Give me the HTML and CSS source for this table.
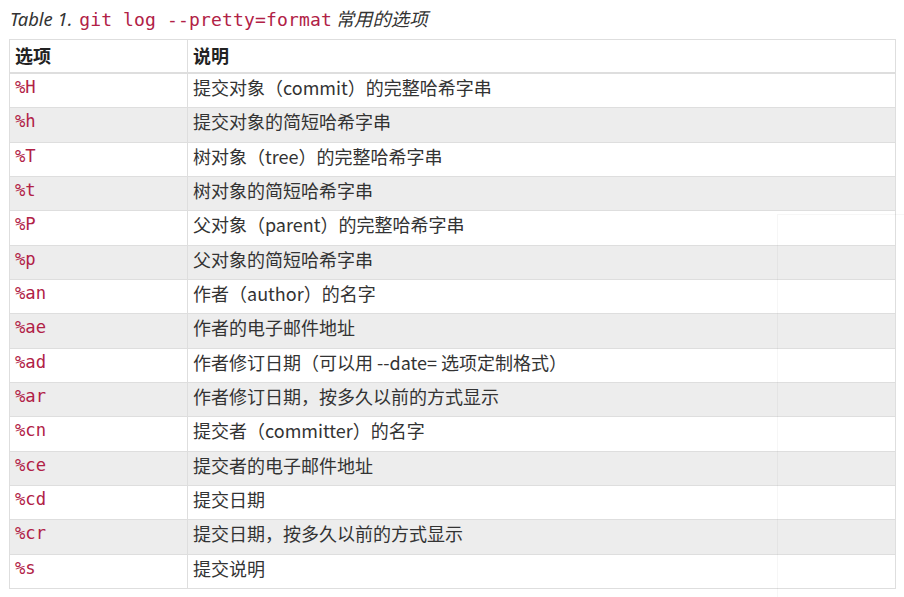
FILE: index.html
```html
<!DOCTYPE html>
<html lang="zh-CN">
<head>
<meta charset="utf-8">
<title>git log --pretty=format 常用的选项</title>
<link rel="stylesheet" href="styles.css">
</head>
<body>
<div class="page">
<table class="tableblock">
<caption class="title">Table 1. <code>git log --pretty=format</code> 常用的选项</caption>
<colgroup><col class="c1"><col class="c2"></colgroup>
<thead>
<tr><th>选项</th><th>说明</th></tr>
</thead>
<tbody>
<tr><td><code>%H</code></td><td>提交对象（commit）的完整哈希字串</td></tr>
<tr><td><code>%h</code></td><td>提交对象的简短哈希字串</td></tr>
<tr><td><code>%T</code></td><td>树对象（tree）的完整哈希字串</td></tr>
<tr><td><code>%t</code></td><td>树对象的简短哈希字串</td></tr>
<tr><td><code>%P</code></td><td>父对象（parent）的完整哈希字串</td></tr>
<tr><td><code>%p</code></td><td>父对象的简短哈希字串</td></tr>
<tr><td><code>%an</code></td><td>作者（author）的名字</td></tr>
<tr><td><code>%ae</code></td><td>作者的电子邮件地址</td></tr>
<tr><td><code>%ad</code></td><td>作者修订日期（可以用 --date= 选项定制格式）</td></tr>
<tr><td><code>%ar</code></td><td>作者修订日期，按多久以前的方式显示</td></tr>
<tr><td><code>%cn</code></td><td>提交者（committer）的名字</td></tr>
<tr><td><code>%ce</code></td><td>提交者的电子邮件地址</td></tr>
<tr><td><code>%cd</code></td><td>提交日期</td></tr>
<tr><td><code>%cr</code></td><td>提交日期，按多久以前的方式显示</td></tr>
<tr><td><code>%s</code></td><td>提交说明</td></tr>
</tbody>
</table>
<div class="ghost"></div>
</div>
</body>
</html>
```
FILE: styles.css
```css
html, body {
  margin: 0;
  padding: 0;
  background: #fff;
}
body {
  font-family: "Noto Sans", "Noto Sans CJK SC", sans-serif;
  color: #333;
  overflow: hidden;
}
.page {
  position: relative;
  padding: 6px 0 0 9px;
  height: 591px;
  width: 895px;
  overflow: hidden;
}
.tableblock {
  width: 887px;
  border-collapse: collapse;
  border: 1px solid #dedede;
  font-size: 18px;
  table-layout: fixed;
}
.c1 { width: 178px; }
.title {
  caption-side: top;
  text-align: left;
  font-style: italic;
  font-size: 18.4px;
  line-height: 26px;
  padding: 0 0 6px 1px;
  color: #333;
  white-space: nowrap;
}
.title code {
  font-style: normal;
  font-size: 18px;
  letter-spacing: 0.15px;
  margin: 0 -1px 0 2px;
}
code {
  font-family: "DejaVu Sans Mono", "Liberation Mono", monospace;
  color: #b12146;
  font-size: 17.2px;
}
td code {
  display: inline-block;
  line-height: 24px;
  vertical-align: top;
}
th, td {
  border: 1px solid #dedede;
  text-align: left;
  vertical-align: top;
  padding: 1px 5px 7.33px;
  line-height: 25px;
  height: 25px;
  font-family: "Noto Sans CJK SC", "Noto Sans", sans-serif;
}
th {
  font-weight: bold;
  color: #222;
  padding: 3px 5px 4px;
  border-bottom: 2px solid #dedede;
}
tbody tr:nth-child(even) td {
  background: #ededed;
}
.ghost {
  position: absolute;
  left: 777px;
  top: 214px;
  right: 0;
  bottom: 0;
  border-left: 1px solid rgba(0, 0, 0, 0.035);
  border-top: 1px solid rgba(0, 0, 0, 0.035);
}
```
